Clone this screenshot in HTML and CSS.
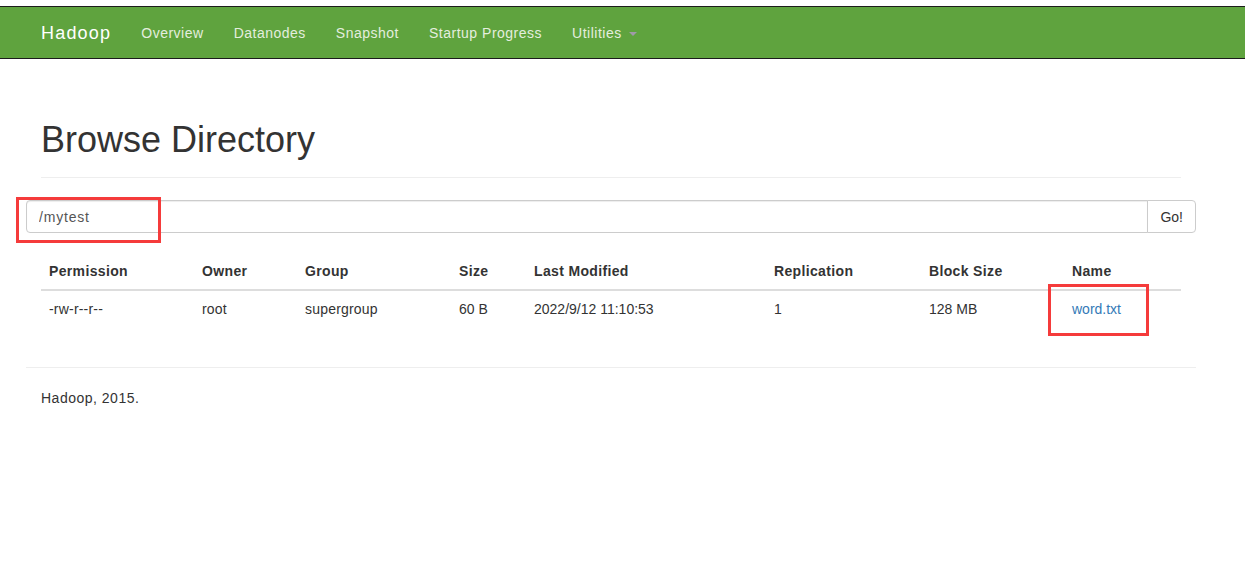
FILE: index.html
```html
<!DOCTYPE html>
<html>
<head>
<meta charset="utf-8">
<title>Browsing HDFS</title>
<link rel="stylesheet" href="styles.css">
</head>
<body>
<header class="navbar">
  <div class="nav-inner">
    <a class="brand" href="#">Hadoop</a>
    <ul class="nav">
      <li><a href="#">Overview</a></li>
      <li><a href="#">Datanodes</a></li>
      <li><a href="#">Snapshot</a></li>
      <li><a href="#">Startup Progress</a></li>
      <li><a href="#">Utilities <span class="caret"></span></a></li>
    </ul>
  </div>
</header>

<main class="container">
  <div class="page-header"><h1>Browse Directory</h1></div>

  <div class="row">
    <form class="input-group">
      <input class="form-control" type="text" value="/mytest">
      <button class="btn" type="button">Go!</button>
    </form>
  </div>

  <table class="table">
    <colgroup>
      <col class="c1"><col class="c2"><col class="c3"><col class="c4">
      <col class="c5"><col class="c6"><col class="c7"><col class="c8">
    </colgroup>
    <thead>
      <tr>
        <th>Permission</th><th>Owner</th><th>Group</th><th>Size</th>
        <th>Last Modified</th><th>Replication</th><th>Block Size</th><th>Name</th>
      </tr>
    </thead>
    <tbody>
      <tr>
        <td class="narrow">-rw-r--r--</td><td class="narrow">root</td><td class="narrow">supergroup</td><td>60 B</td>
        <td>2022/9/12 11:10:53</td><td>1</td><td>128 MB</td><td><a class="link" href="#">word.txt</a></td>
      </tr>
    </tbody>
  </table>

  <div class="row">
    <hr class="footer-rule">
  </div>
  <footer class="footer">Hadoop, 2015.</footer>
</main>

<div class="mark mark-input"></div>
<div class="mark mark-name"></div>
</body>
</html>
```

FILE: styles.css
```css
html, body {
  margin: 0;
  padding: 0;
  background: #fff;
}
body {
  font-family: "Liberation Sans", Arial, sans-serif;
  font-size: 14px;
  line-height: 20px;
  color: #333;
  padding-top: 6px;
}
a { text-decoration: none; }

.navbar {
  background: #5fa33e;
  border-top: 1px solid #1c1c1c;
  border-bottom: 1px solid #1c1c1c;
  height: 51px;
}
.nav-inner {
  width: 1140px;
  margin-left: 26px;
  padding: 0 15px;
  display: flex;
  align-items: flex-start;
}
.brand {
  display: block;
  margin-left: -15px;
  padding: 16px 15px 15px;
  font-size: 18px;
  line-height: 20px;
  letter-spacing: 1.2px;
  color: #fff;
}
.nav {
  display: flex;
  list-style: none;
  margin: 0;
  padding: 0;
}
.nav a {
  display: block;
  padding: 16px 15px 15px;
  line-height: 20px;
  color: #e4eede;
  letter-spacing: 0.5px;
}
.caret {
  display: inline-block;
  width: 0;
  height: 0;
  margin-left: 3px;
  vertical-align: middle;
  border-top: 4px solid #a09aa8;
  border-left: 4px solid transparent;
  border-right: 4px solid transparent;
}

.container {
  width: 1140px;
  margin-left: 26px;
  padding: 0 15px;
}
.page-header {
  margin-top: 61px;
  padding-bottom: 17px;
  border-bottom: 1px solid #eee;
}
.page-header h1 {
  margin: 0;
  font-size: 36px;
  line-height: 40px;
  font-weight: 500;
  color: #333;
}

.row {
  margin: 0 -15px;
}
.input-group {
  display: flex;
  margin: 22px 0 0;
}
.form-control {
  flex: 1;
  height: 33px;
  box-sizing: border-box;
  padding: 6px 12px;
  font-family: "Liberation Sans", Arial, sans-serif;
  font-size: 14px;
  letter-spacing: 0.8px;
  color: #555;
  border: 1px solid #ccc;
  border-radius: 4px 0 0 4px;
  box-shadow: inset 0 1px 1px rgba(0,0,0,.075);
  outline: none;
}
.btn {
  height: 33px;
  box-sizing: border-box;
  margin-left: -1px;
  padding: 6px 12px;
  font-family: "Liberation Sans", Arial, sans-serif;
  font-size: 14px;
  color: #333;
  background: #fff;
  border: 1px solid #ccc;
  border-radius: 0 4px 4px 0;
}

.table {
  width: 1140px;
  margin: 20px 0 0;
  border-collapse: collapse;
  table-layout: fixed;
}
.c1 { width: 153px; }
.c2 { width: 103px; }
.c3 { width: 154px; }
.c4 { width: 75px; }
.c5 { width: 240px; }
.c6 { width: 155px; }
.c7 { width: 143px; }
.c8 { width: 117px; }
.table th {
  text-align: left;
  padding: 8px;
  line-height: 20px;
  font-weight: bold;
  letter-spacing: 0.35px;
  border-bottom: 2px solid #ddd;
  white-space: nowrap;
}
.table td {
  padding: 8px;
  line-height: 20px;
  white-space: nowrap;
}
.table td.narrow { letter-spacing: 0.2px; }
.link { color: #337ab7; }

.footer-rule {
  margin: 40px 0 20px;
  border: 0;
  border-top: 1px solid #eee;
}
.footer {
  line-height: 20px;
  letter-spacing: 0.5px;
}

.mark {
  position: absolute;
  box-sizing: border-box;
  border: 3px solid #f53b3b;
}
.mark-input {
  left: 16px;
  top: 197px;
  width: 145px;
  height: 46px;
}
.mark-name {
  left: 1048px;
  top: 284px;
  width: 101px;
  height: 52px;
}
```
